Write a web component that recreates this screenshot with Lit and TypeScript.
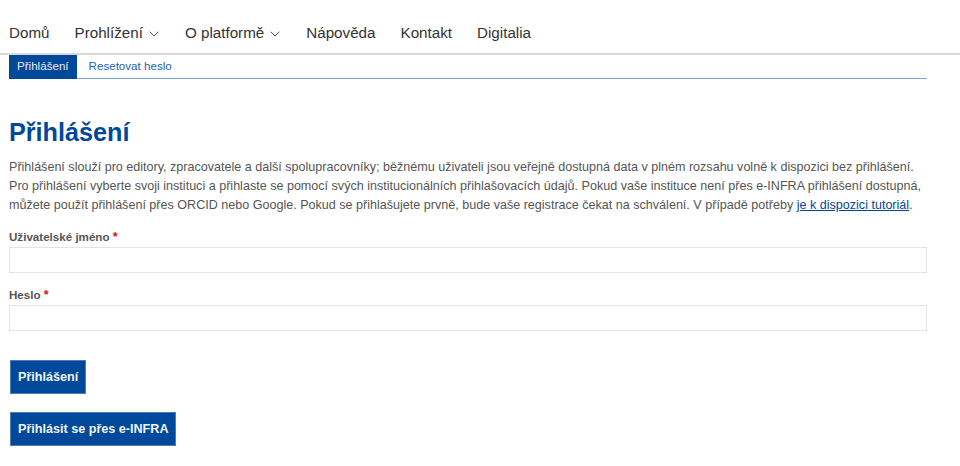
import { LitElement, html, css } from "lit";
import { customElement } from "lit/decorators.js";

const chevron = html`<svg class="chev" width="10" height="6" viewBox="0 0 10 6"><path d="M.7.7 5 5 9.3.7" fill="none" stroke="#555" stroke-width="1"/></svg>`;

@customElement("app-root")
export class AppRoot extends LitElement {
  static styles = css`
    :host { display: block; font-family: "Liberation Sans", Arial, sans-serif; color: #444; height: 466px; overflow: hidden; background: #fff; }
    .nav { display: flex; align-items: flex-start; height: 55px; box-sizing: border-box; padding: 24px 0 0 9px; border-bottom: 2px solid #d9d9d9; font-size: 15.2px; color: #333; line-height: 18px; }
    .nav span { display: inline-flex; align-items: center; gap: 6px; margin-right: 25px; }
    .nav span.sub { margin-right: 26px; }
    .chev { margin-top: 2px; }
    .main { width: 918px; margin-left: 9px; }
    .tabs { display: flex; height: 24px; box-sizing: border-box; border-bottom: 1px solid #7ba3d6; font-size: 11.6px; align-items: stretch; }
    .tabs a { padding: 0 8px; line-height: 22px; color: #1f5fae; text-decoration: none; margin-right: 4px; }
    .tabs a.active { background: #004899; color: #e8eef7; height: 24px; }
    h1 { margin: 38px 0 0; color: #004899; font-size: 25.2px; line-height: 30px; font-weight: 700; }
    p { margin: 11px 0 0; font-size: 12.57px; line-height: 19px; color: #555; }
    p a { color: #004899; }
    .field { margin-top: 14px; }
    label { display: block; font-size: 11.6px; font-weight: 700; line-height: 15px; color: #555; margin-bottom: 3px; }
    label i { color: #e01010; font-style: normal; font-size: 12.6px; line-height: 0; }
    .input { height: 26px; box-sizing: border-box; border: 1px solid #e4e4e4; }
    .btn { display: block; width: fit-content; box-sizing: border-box; background: #004899; color: #f0f4fa; font-weight: 700; font-size: 12.6px; height: 34px; line-height: 32px; padding: 0 7px; margin-left: 1px; border: 1px solid #4a7cbc; }
    .b1 { margin-top: 29px; }
    .b2 { margin-top: 18px; }
  `;
  render() {
    return html`
      <div class="nav"><span>Domů</span><span class="sub">Prohlížení ${chevron}</span><span class="sub">O platformě ${chevron}</span><span>Nápověda</span><span>Kontakt</span><span>Digitalia</span></div>
      <div class="main">
        <div class="tabs"><a class="active">Přihlášení</a><a>Resetovat heslo</a></div>
        <h1>Přihlášení</h1>
        <p>Přihlášení slouží pro editory, zpracovatele a další spolupracovníky; běžnému uživateli jsou veřejně dostupná data v plném rozsahu volně k dispozici bez přihlášení. Pro přihlášení vyberte svoji instituci a přihlaste se pomocí svých institucionálních přihlašovacích údajů. Pokud vaše instituce není přes e-INFRA přihlášení dostupná, můžete použít přihlášení přes ORCID nebo Google. Pokud se přihlašujete prvně, bude vaše registrace čekat na schválení. V případě potřeby <a href="#">je k dispozici tutoriál</a>.</p>
        <div class="field"><label>Uživatelské jméno <i>*</i></label><div class="input"></div></div>
        <div class="field"><label>Heslo <i>*</i></label><div class="input"></div></div>
        <div class="btn b1">Přihlášení</div>
        <div class="btn b2">Přihlásit se přes e-INFRA</div>
      </div>`;
  }
}
